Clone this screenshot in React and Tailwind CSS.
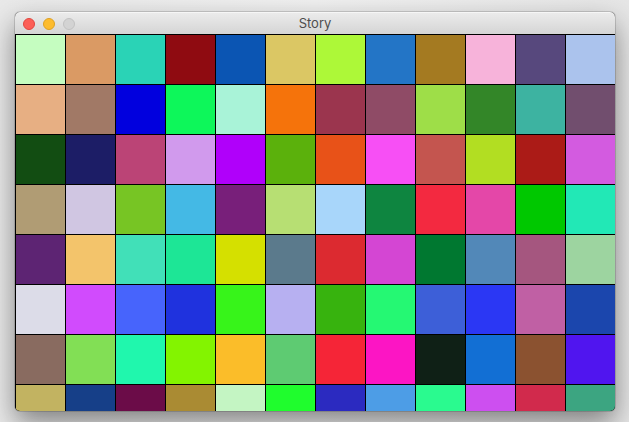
const COLORS = [
  ['#c5fdc0', '#da9a64', '#2ad3b6', '#8f0b11', '#0b55b3', '#dbc764', '#adf838', '#2375c6', '#a47a21', '#f7b3da', '#57487d', '#abc3ed'],
  ['#e7af83', '#a17966', '#0100de', '#0df75a', '#a9f3d8', '#f5730b', '#9b354e', '#8f4b66', '#9ede48', '#338628', '#3db3a1', '#714e6e'],
  ['#124d12', '#1c1d66', '#bb4476', '#d19aed', '#b000fa', '#5bb10c', '#e85218', '#f74ff5', '#c4554f', '#b2de22', '#ab1b17', '#d35be0'],
  ['#b09c74', '#d0c6e2', '#77c524', '#44b9e5', '#781f7a', '#b7df73', '#a8d6fa', '#0e8540', '#f32940', '#e447a8', '#00c800', '#22e8b6'],
  ['#5d2473', '#f3c46b', '#41e0b8', '#1de696', '#d5e000', '#5b7a8c', '#dc2a30', '#d446d3', '#007830', '#5288b8', '#a5567f', '#9dd4a0'],
  ['#dcdce8', '#d14bfd', '#4764fc', '#1f32de', '#37f41a', '#b7b0f1', '#37b30e', '#25f873', '#3d5fd8', '#2b37f4', '#c060a4', '#1b46ad'],
  ['#896b60', '#82df55', '#20f7ad', '#83f400', '#fbbd29', '#5ecb72', '#f52537', '#fc15c4', '#0f2016', '#126fd4', '#8b5230', '#5015ef'],
  ['#c2b361', '#163f88', '#6b0c48', '#aa8b33', '#c4f5c3', '#1ffd2d', '#2b2ac0', '#4d9de6', '#2afa8f', '#cd4ff0', '#d12a4c', '#3ca581'],
];

function TrafficLights() {
  return (
    <div className="flex items-center gap-2 pl-2">
      <span className="w-3 h-3 rounded-full bg-[#fc5f57] border border-[#e2463f]" />
      <span className="w-3 h-3 rounded-full bg-[#fdbc2e] border border-[#dea123]" />
      <span className="w-3 h-3 rounded-full bg-[#d3d3d3] border border-[#c2c2c2]" />
    </div>
  );
}

export default function App() {
  return (
    <div className="w-[629px] h-[422px] overflow-hidden bg-gradient-to-r from-[#e9e9e9] via-[#f0f0f0] to-[#e6e6e6] pt-[12px] pl-[15px]">
      <div className="w-[600px] h-[399px] rounded-[5px] overflow-hidden bg-black shadow-[0_12px_28px_rgba(0,0,0,0.45),0_0_0_1px_rgba(0,0,0,0.14)]">
        <div className="h-[22px] grid grid-cols-[1fr_auto_1fr] items-center bg-gradient-to-b from-[#ebebeb] to-[#d5d5d5] border-t border-[#f6f6f6]">
          <TrafficLights />
          <div className="font-['Inter',sans-serif] text-[13px] text-[#4d4d4d] leading-none">Story</div>
          <div />
        </div>
        <div className="grid grid-cols-[repeat(12,49px)] gap-px pl-px pt-px bg-black">
          {COLORS.flat().map((c, i) => (
            <div key={i} className="h-[49px]" style={{ backgroundColor: c }} />
          ))}
        </div>
      </div>
    </div>
  );
}
